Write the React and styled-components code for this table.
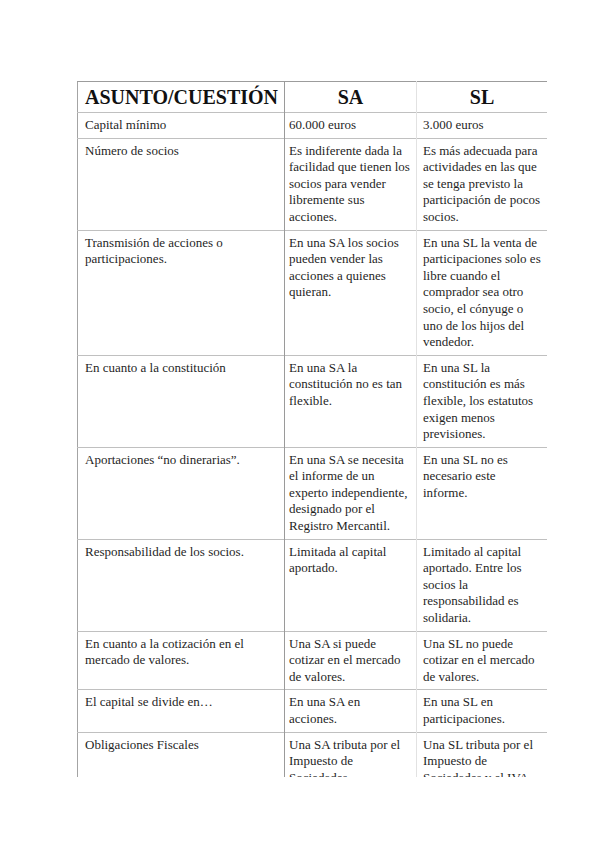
import React from "react";
import styled, { createGlobalStyle } from "styled-components";

const Global = createGlobalStyle`
  html, body { margin: 0; padding: 0; background: #ffffff; }
  body { font-family: "Liberation Serif", "Times New Roman", serif; color: #1c1c1c; }
`;

const Page = styled.div`
  width: 599px;
  height: 848px;
  padding: 81px 0 0 77px;
  box-sizing: border-box;
  background: #ffffff;
`;

const Clip = styled.div`
  width: 472px;
  height: 696px;
  overflow: hidden;
`;

const Table = styled.table`
  border-collapse: collapse;
  table-layout: fixed;
  width: 471px;
  border-top: 1px solid #9c9c9c;
  border-left: 1px solid #a4a4a4;
  border-right: 1px solid #a4a4a4;
`;

const Col = styled.col`
  width: ${(p) => p.$w}px;
`;

const Row = styled.tr`
  border-bottom: 1px solid #c0c0c0;
`;

const HeadCell = styled.th`
  font-family: "Liberation Serif", "Times New Roman", serif;
  font-weight: 700;
  font-size: 20px;
  line-height: 23px;
  padding: 4px ${(p) => (p.$center ? 0 : 6)}px 3px ${(p) => (p.$center ? 0 : 7)}px;
  text-align: ${(p) => (p.$center ? "center" : "left")};
  color: #111;
  vertical-align: middle;
  border-right: 1px solid ${(p) => p.$line || "transparent"};
`;

const Cell = styled.td`
  font-size: 13px;
  line-height: 16.6px;
  padding: 4px 2px 4px ${(p) => p.$pl}px;
  vertical-align: top;
  color: #1f1f1f;
  border-right: 1px solid ${(p) => p.$line || "transparent"};
`;

const Line = styled.span`
  display: block;
  white-space: nowrap;
`;

const rows = [
  [["Capital mínimo"], ["60.000 euros"], ["3.000 euros"]],
  [
    ["Número de socios"],
    ["Es indiferente dada la", "facilidad que tienen los", "socios para vender", "libremente sus", "acciones."],
    ["Es más adecuada para", "actividades en las que", "se tenga previsto la", "participación de pocos", "socios."],
  ],
  [
    ["Transmisión de acciones o", "participaciones."],
    ["En una SA los socios", "pueden vender las", "acciones a quienes", "quieran."],
    ["En una SL la venta de", "participaciones solo es", "libre cuando el", "comprador sea otro", "socio, el cónyuge o", "uno de los hijos del", "vendedor."],
  ],
  [
    ["En cuanto a la constitución"],
    ["En una SA la", "constitución no es tan", "flexible."],
    ["En una SL la", "constitución es más", "flexible, los estatutos", "exigen menos", "previsiones."],
  ],
  [
    ["Aportaciones “no dinerarias”."],
    ["En una SA se necesita", "el informe de un", "experto independiente,", "designado por el", "Registro Mercantil."],
    ["En una SL no es", "necesario este", "informe."],
  ],
  [
    ["Responsabilidad de los socios."],
    ["Limitada al capital", "aportado."],
    ["Limitado al capital", "aportado. Entre los", "socios la", "responsabilidad es", "solidaria."],
  ],
  [
    ["En cuanto a la cotización en el", "mercado de valores."],
    ["Una SA si puede", "cotizar en el mercado", "de valores."],
    ["Una SL no puede", "cotizar en el mercado", "de valores."],
  ],
  [
    ["El capital se divide en…"],
    ["En una SA en", "acciones."],
    ["En una SL en", "participaciones."],
  ],
  [
    ["Obligaciones Fiscales"],
    ["Una SA tributa por el", "Impuesto de", "Sociedades."],
    ["Una SL tributa por el", "Impuesto de", "Sociedades y el IVA."],
  ],
];

const cellStyle = [
  { pl: 7, line: "#9a9a9a" },
  { pl: 4, line: "#e2e2e2" },
  { pl: 6, line: null },
];

export default function App() {
  return (
    <>
      <Global />
      <Page>
        <Clip>
          <Table>
            <colgroup>
              <Col $w={207} />
              <Col $w={132} />
              <Col $w={131} />
            </colgroup>
            <thead>
              <Row>
                <HeadCell $line="#9a9a9a">ASUNTO/CUESTIÓN</HeadCell>
                <HeadCell $center $line="#e2e2e2">SA</HeadCell>
                <HeadCell $center>SL</HeadCell>
              </Row>
            </thead>
            <tbody>
              {rows.map((r, i) => (
                <Row key={i}>
                  {r.map((lines, j) => (
                    <Cell key={j} $pl={cellStyle[j].pl} $line={cellStyle[j].line}>
                      {lines.map((t, k) => (
                        <Line key={k}>{t}</Line>
                      ))}
                    </Cell>
                  ))}
                </Row>
              ))}
            </tbody>
          </Table>
        </Clip>
      </Page>
    </>
  );
}
